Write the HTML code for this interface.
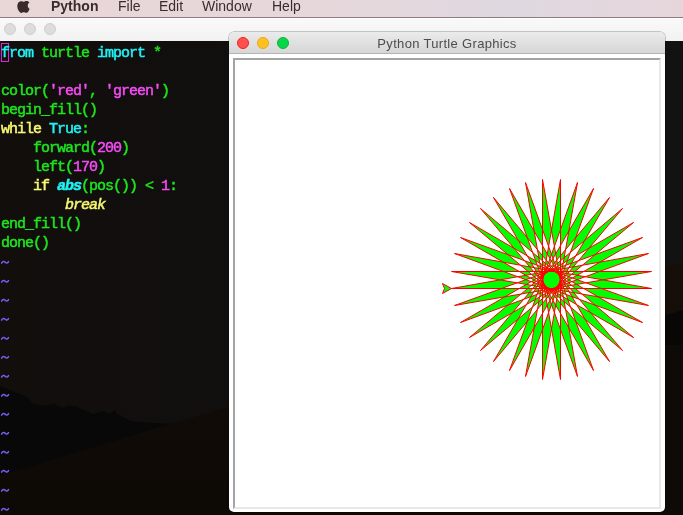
<!DOCTYPE html>
<html><head><meta charset="utf-8">
<style>
*{margin:0;padding:0;box-sizing:border-box}
html,body{width:683px;height:515px;overflow:hidden;background:#100e0d;position:relative}
#menubar{position:absolute;left:0;top:0;width:683px;height:18px;background:linear-gradient(90deg,#e9d6d7 0%,#e6d7da 45%,#dfd8e0 75%,#e6d6db 100%);border-bottom:1px solid #927b80;font-family:"Liberation Sans",sans-serif;font-size:14px;color:#3a2c2c}
#menubar span{will-change:transform;position:absolute;top:-2px;white-space:nowrap}
#ttitle{position:absolute;left:0;top:18px;width:683px;height:23px;background:linear-gradient(#f9f9f9,#f2f2f2);border-top:1px solid #fdfdfd}
.dot{position:absolute;width:12px;height:12px;border-radius:50%}
.gdot{background:#dcdcdc;border:0.5px solid #cfcfcf}
#term{position:absolute;left:0;top:41px;width:683px;height:474px;background:#100e0d;overflow:hidden}
#code{will-change:transform;position:absolute;left:1px;top:3px;font-family:"Liberation Mono",monospace;font-size:15px;letter-spacing:-1px;line-height:19px;white-space:pre;color:#1ee41e;-webkit-text-stroke:0.5px}
.c{color:#20f2f6}.g{color:#1ee41e}.m{color:#f44cf4}.y{color:#f8f872}.b{font-weight:bold}.i{font-style:italic}.t{color:#7b5cf0}
#cursor{position:absolute;left:1px;top:2px;width:8px;height:19px;border:1px solid #e020e0}
#twin{position:absolute;left:229px;top:32px;width:436px;height:480px;background:#ffffff;border-radius:5px;overflow:hidden;box-shadow:0 0 0 0.5px rgba(0,0,0,0.4)}
#twtitle{will-change:transform;position:absolute;left:0;top:0;width:436px;height:22px;padding-top:1px;letter-spacing:0.32px;background:linear-gradient(#ebebeb,#d6d6d6);border-bottom:1px solid #b5b5b5;font-family:"Liberation Sans",sans-serif;font-size:13px;color:#4d4d4d;text-align:center;line-height:22px}
#canvas{position:absolute;left:4px;top:26px;width:428px;height:451px;border-top:2px solid #a4a4a4;border-left:2px solid #a4a4a4;border-right:2px solid #e8e8e8;border-bottom:2px solid #e8e8e8;background:#fff}
</style></head><body>
<div id="menubar">
  <svg style="position:absolute;left:0;top:0" width="40" height="18"><path transform="translate(17.1,-2.3) scale(0.92)" fill="#3a2a2a" d="M11.6 8.5c0-2.1 1.7-3.1 1.8-3.2-1-1.4-2.5-1.6-3-1.6-1.3-.1-2.5.8-3.2.8-.7 0-1.7-.8-2.8-.7C3 3.8 1.7 4.6 1 5.9-.5 8.5.6 12.4 2 14.4c.7 1 1.5 2.1 2.6 2.1 1-.1 1.4-.7 2.7-.7 1.2 0 1.6.7 2.7.6 1.1 0 1.8-1 2.5-2 .8-1.1 1.1-2.2 1.1-2.3 0 0-2.1-.8-2.1-3.6z"/></svg>
  <span style="left:51px;font-weight:bold">Python</span>
  <span style="left:118px">File</span>
  <span style="left:159px">Edit</span>
  <span style="left:202px">Window</span>
  <span style="left:272px">Help</span>
</div>
<div id="ttitle">
  <div class="dot gdot" style="left:4px;top:4px"></div>
  <div class="dot gdot" style="left:24px;top:4px"></div>
  <div class="dot gdot" style="left:44px;top:4px"></div>
</div>
<div id="term">
<svg style="position:absolute;left:0;top:0" width="683" height="474" viewBox="0 41 683 474">
<defs><linearGradient id="sky" x1="0" y1="0" x2="1" y2="0"><stop offset="0" stop-color="#110e0c"/><stop offset="1" stop-color="#121213"/></linearGradient><linearGradient id="dune" x1="0" y1="0" x2="0" y2="1"><stop offset="0" stop-color="#160e09"/><stop offset="1" stop-color="#0d0905"/></linearGradient></defs>
<rect x="0" y="41" width="683" height="474" fill="url(#sky)"/>
<polygon fill="#090808" points="0,386 20,394 25,396 34,404 44,406 54,403.5 62,408 67,405.5 76,406 84,410 93,414 103,411 109,414 115,410 117,414 125,418 131,421 136,422 156,423 175,424 230,424 230,515 0,515"/>
<polygon fill="url(#dune)" points="0,476 230,406 683,262 683,515 0,515"/>
<polygon fill="#080706" points="663,316 683,310 683,345 663,345"/>
<polygon fill="#0e0a07" points="663,345 683,345 683,515 663,515"/>
</svg>
<div id="cursor"></div>
<div id="code"><span class="c">from</span> turtle <span class="c">import</span> *

color(<span class="m">'red'</span>, <span class="m">'green'</span>)
begin_fill()
<span class="y">while</span> <span class="c">True</span>:
    forward(<span class="m">200</span>)
    left(<span class="m">170</span>)
    <span class="y">if</span> <span class="c b i">abs</span>(pos()) &lt; <span class="m">1</span>:
        <span class="y i">break</span>
end_fill()
done()
</div>
</div>
<svg style="position:absolute;left:0;top:0" width="683" height="515"><g fill="none" stroke="#7a5ef4" stroke-width="1.5" stroke-linecap="round"><path d="M1.6,263.1 C2.4,261.2 4.2,261.2 5.2,262.2 S7.6,263.3 8.5,261.6"/><path d="M1.6,282.1 C2.4,280.2 4.2,280.2 5.2,281.2 S7.6,282.3 8.5,280.6"/><path d="M1.6,301.1 C2.4,299.2 4.2,299.2 5.2,300.2 S7.6,301.3 8.5,299.6"/><path d="M1.6,320.1 C2.4,318.2 4.2,318.2 5.2,319.2 S7.6,320.3 8.5,318.6"/><path d="M1.6,339.1 C2.4,337.2 4.2,337.2 5.2,338.2 S7.6,339.3 8.5,337.6"/><path d="M1.6,358.1 C2.4,356.2 4.2,356.2 5.2,357.2 S7.6,358.3 8.5,356.6"/><path d="M1.6,377.1 C2.4,375.2 4.2,375.2 5.2,376.2 S7.6,377.3 8.5,375.6"/><path d="M1.6,396.1 C2.4,394.2 4.2,394.2 5.2,395.2 S7.6,396.3 8.5,394.6"/><path d="M1.6,415.1 C2.4,413.2 4.2,413.2 5.2,414.2 S7.6,415.3 8.5,413.6"/><path d="M1.6,434.1 C2.4,432.2 4.2,432.2 5.2,433.2 S7.6,434.3 8.5,432.6"/><path d="M1.6,453.1 C2.4,451.2 4.2,451.2 5.2,452.2 S7.6,453.3 8.5,451.6"/><path d="M1.6,472.1 C2.4,470.2 4.2,470.2 5.2,471.2 S7.6,472.3 8.5,470.6"/><path d="M1.6,491.1 C2.4,489.2 4.2,489.2 5.2,490.2 S7.6,491.3 8.5,489.6"/><path d="M1.6,510.1 C2.4,508.2 4.2,508.2 5.2,509.2 S7.6,510.3 8.5,508.6"/></g></svg>
<div id="twin">
  <div id="twtitle">Python Turtle Graphics</div>
  <div class="dot" style="left:8px;top:5px;background:#ff514e;border:0.6px solid #f0201c"></div>
  <div class="dot" style="left:28px;top:5px;background:#ffc022;border:0.6px solid #eea514"></div>
  <div class="dot" style="left:48px;top:5px;background:#06d64a;border:0.6px solid #08b43a"></div>
  <div id="canvas"></div>
</div>
<svg style="position:absolute;left:0;top:0" width="683" height="515">
  <polygon fill="#00ff00" stroke="#ff0000" stroke-width="1" points="451.5,288.5 442.5,283.5 444.5,288.5 442.5,293.5"/>
  <polygon fill="#00ff00" fill-rule="evenodd" stroke="#ff0000" stroke-width="1" stroke-linejoin="miter" stroke-miterlimit="10" points="451.5,288.5 651.5,288.5 454.5,253.5 642.5,322.5 469.5,222.5 622.5,350.5 493.5,197.5 593.5,370.5 525.5,182.5 560.5,379.5 560.5,179.5 525.5,376.5 593.5,188.5 493.5,361.5 622.5,208.5 469.5,337.5 642.5,237.5 454.5,305.5 651.5,271.5 451.5,271.5 648.5,305.5 460.5,237.5 633.5,337.5 480.5,208.5 609.5,361.5 509.5,188.5 577.5,376.5 542.5,179.5 542.5,379.5 577.5,182.5 509.5,370.5 609.5,197.5 480.5,350.5 633.5,222.5 460.5,322.5 648.5,253.5"/>
</svg>
</body></html>
